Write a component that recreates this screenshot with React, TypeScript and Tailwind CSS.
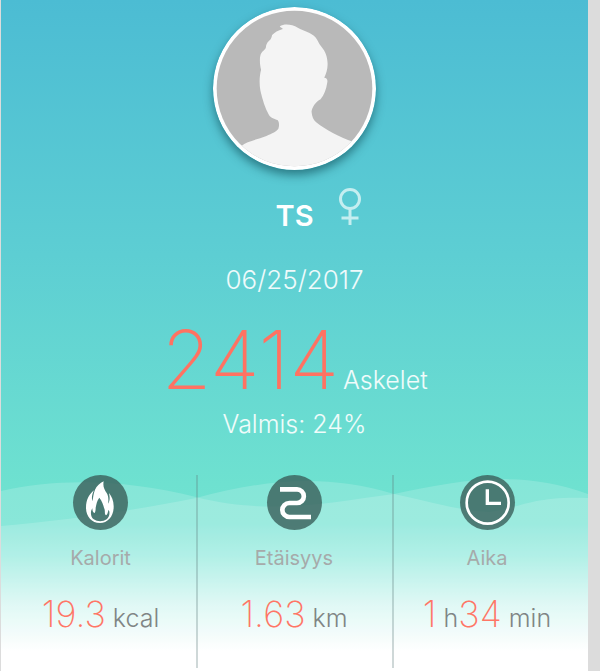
import type { ReactNode } from "react";

function Avatar() {
  return (
    <svg
      viewBox="37 22 488 488"
      className="w-[163px] h-[163px] rounded-full shadow-[0_5px_10px_rgba(0,50,60,0.5)]"
      role="img"
      aria-label="TS"
    >
      <defs>
        <clipPath id="avatar-clip">
          <circle cx="281" cy="266" r="233" />
        </clipPath>
      </defs>
      <circle cx="281" cy="266" r="244" fill="#ffffff" />
      <circle cx="281" cy="266" r="233" fill="#b9b9b9" />
      <path
        clipPath="url(#avatar-clip)"
        fill="#f4f4f4"
        d="M237 80C251 71 273 74 291 84C309 94 331 99 343 112C351 121 352 130 361 140C374 155 379 170 380 190C381 206 376 221 370 234C378 235 381 239 379 249C376 268 370 286 359 298C345 306 334 320 332 335C333 350 338 361 345 366C378 392 415 410 454 425L490 520H80L122 438C138 424 168 419 197 408C213 402 229 394 233 386C236 376 235 367 231 361C221 356 211 355 205 346C193 326 185 299 179 273C175 251 176 229 181 210C176 190 176 169 182 160C186 153 192 151 195 145C196 135 198 129 205 123C212 118 212 113 214 106C222 98 231 92 246 88C243 83 240 86 237 80Z"
      />
    </svg>
  );
}

function FemaleIcon() {
  return (
    <svg viewBox="0 0 24 38" className="w-6 h-[38px]" fill="none" stroke="#c5eef0" strokeWidth="3" role="img" aria-label="Nainen">
      <circle cx="12" cy="11" r="9.5" />
      <path d="M12 20.500V37M3.500 30H20.500" />
    </svg>
  );
}

function FlameIcon() {
  return (
    <svg viewBox="0 0 165 165" className="w-[55px] h-[55px]" aria-hidden="true">
      <path
        fill="#ffffff"
        fillRule="evenodd"
        d="M92 19C89 34 94 43 101 54C107 64 107 75 105 86C111 79 111 67 108 54C116 64 122 77 122 93C123 123 105 144 81 144C56 144 39 125 39 98C39 74 49 57 63 46C58 56 55 67 58 79C61 67 61 56 66 44C71 34 81 24 92 19ZM79 68C72 75 70 89 68 98C68 106 67 111 65 114C60 113 58 108 58 100C51 111 53 126 62 133C73 141 90 141 101 133C109 126 112 113 107 104C104 112 104 118 99 121C93 117 98 108 93 98C91 89 87 78 79 68Z"
      />
    </svg>
  );
}

function RouteIcon() {
  return (
    <svg viewBox="0 0 165 165" className="w-[55px] h-[55px]" fill="none" stroke="#ffffff" strokeWidth="14" aria-hidden="true">
      <path d="M39 43H90A20.500 20.500 0 0 1 90 84H67A21 21 0 0 0 67 126H132" />
    </svg>
  );
}

function ClockIcon() {
  return (
    <svg viewBox="0 0 165 165" className="w-[55px] h-[55px]" fill="none" stroke="#ffffff" aria-hidden="true">
      <circle cx="83" cy="83" r="63" strokeWidth="8" />
      <path d="M82 43V85H123" strokeWidth="10" />
    </svg>
  );
}

function Waves() {
  return (
    <svg
      viewBox="0 0 587 196"
      preserveAspectRatio="none"
      className="absolute inset-x-0 bottom-0 w-full h-[196px]"
      fill="#ffffff"
      fillOpacity="0.17"
      aria-hidden="true"
    >
      <path d="M0 16C55 3 125 4 195 22C270 41 330 27 393 19C460 5 520 -6 587 19V196H0Z" />
      <path d="M0 51C60 46 130 36 195 23C260 6 320 -3 393 19C430 27 460 36 488 37C520 33 530 21 587 23V196H0Z" />
    </svg>
  );
}

type StatProps = {
  icon: ReactNode;
  label: string;
  className?: string;
  children: ReactNode;
};

function Stat({ icon, label, className = "", children }: StatProps) {
  return (
    <div className={`flex flex-col items-center ${className}`}>
      <div className="rounded-full bg-[#3a5f5a]/80">{icon}</div>
      <p className="mt-4 text-[20px] leading-6 text-[#a6aaaa]">{label}</p>
      <p className="mt-6 whitespace-nowrap text-[25px] leading-10 font-light text-[#808585]">{children}</p>
    </div>
  );
}

function Value({ children }: { children: ReactNode }) {
  return <span className="text-[36px] font-extralight text-[#ff7666]">{children}</span>;
}

export default function App() {
  return (
    <div className="min-h-screen bg-[#dcdcdc] pl-px pr-3 font-['Inter',sans-serif]">
      <main className="relative flex min-h-screen flex-col items-center bg-[linear-gradient(to_bottom,#4cbcd3_0%,#5dced3_38%,#6ee1d0_72%,#71e2d2_78%,#91eadd_83%,#d2f6f1_90%,#ffffff_97%)] pt-[7px] pb-[3px]">
        <Waves />

        {/* Profile */}
        <Avatar />
        <div className="mt-4 grid w-full grid-cols-[1fr_auto_1fr] items-start">
          <h1 className="col-start-2 mt-[10px] text-[29px] leading-10 font-semibold text-white">TS</h1>
          <div className="pt-[2px] pl-6">
            <FemaleIcon />
          </div>
        </div>

        {/* Daily steps */}
        <p className="mt-6 text-[26px] leading-10 font-light text-white/90">06/25/2017</p>
        <p className="mt-8 flex items-baseline gap-1 leading-14 text-white/90">
          <span className="text-[81px] leading-14 font-extralight text-[#ff7262]">2414</span>
          <span className="text-[25px] font-light">Askelet</span>
        </p>
        <p className="text-[25px] leading-8 font-light text-white/90">Valmis: 24%</p>

        {/* Totals */}
        <section className="relative mt-auto grid h-[193px] w-full grid-cols-[197fr_196fr_194fr] divide-x-2 divide-[#5f7f7f]/30">
          <Stat icon={<FlameIcon />} label="Kalorit" className="pl-1">
            <Value>19.3</Value> kcal
          </Stat>
          <Stat icon={<RouteIcon />} label="Etäisyys" className="pr-[2px]">
            <Value>1.63</Value> km
          </Stat>
          <Stat icon={<ClockIcon />} label="Aika" className="pr-2">
            <Value>1</Value> h<Value>34</Value> min
          </Stat>
        </section>
      </main>
    </div>
  );
}
